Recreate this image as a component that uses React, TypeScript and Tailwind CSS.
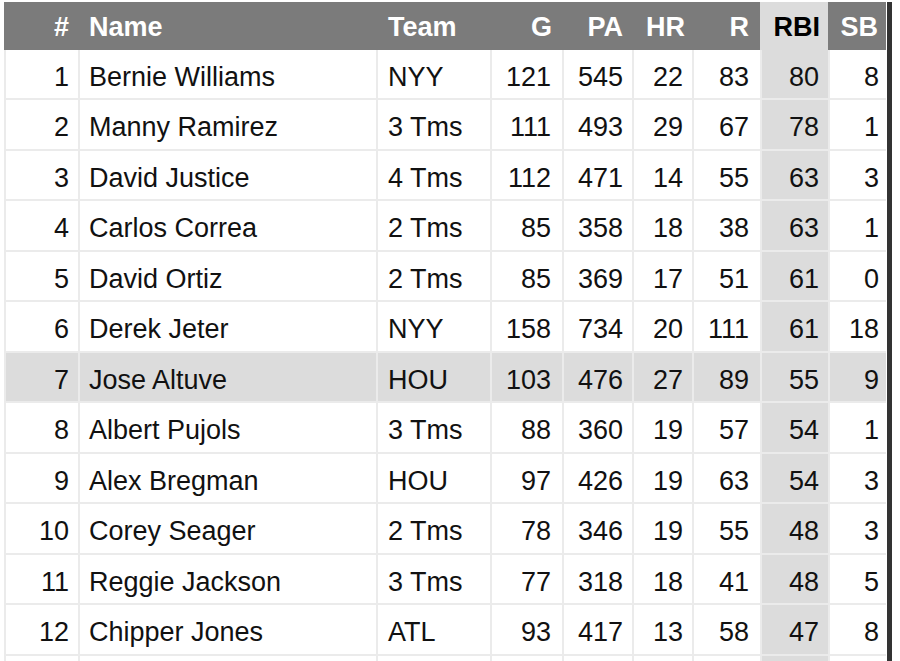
import React from "react";

type Row = [number, string, string, number, number, number, number, number, number];

const rows: Row[] = [
  [1, "Bernie Williams", "NYY", 121, 545, 22, 83, 80, 8],
  [2, "Manny Ramirez", "3 Tms", 111, 493, 29, 67, 78, 1],
  [3, "David Justice", "4 Tms", 112, 471, 14, 55, 63, 3],
  [4, "Carlos Correa", "2 Tms", 85, 358, 18, 38, 63, 1],
  [5, "David Ortiz", "2 Tms", 85, 369, 17, 51, 61, 0],
  [6, "Derek Jeter", "NYY", 158, 734, 20, 111, 61, 18],
  [7, "Jose Altuve", "HOU", 103, 476, 27, 89, 55, 9],
  [8, "Albert Pujols", "3 Tms", 88, 360, 19, 57, 54, 1],
  [9, "Alex Bregman", "HOU", 97, 426, 19, 63, 54, 3],
  [10, "Corey Seager", "2 Tms", 78, 346, 19, 55, 48, 3],
  [11, "Reggie Jackson", "3 Tms", 77, 318, 18, 41, 48, 5],
  [12, "Chipper Jones", "ATL", 93, 417, 13, 58, 47, 8],
];

const gridCols =
  "grid grid-cols-[74px_298px_114px_72px_70px_60px_68px_68px_58px]";

const cell = "flex items-center border-l-2 border-[#ebebeb] pt-[6px]";
const hcell = "flex items-center pt-[3px]";

export default function App() {
  return (
    <div
      className="h-[661px] w-[900px] overflow-hidden bg-white pl-[4px] pt-[2px] text-[#111]"
      style={{ fontFamily: '"Liberation Sans", Arial, sans-serif' }}
    >
      <div className="flex">
        <div className="w-[882px]">
          {/* header */}
          <div className={`${gridCols} h-[48px] bg-[#7b7b7b] text-[27px] font-bold text-white`}>
            <div className={`${hcell} justify-end pr-[9px]`}>#</div>
            <div className={`${hcell} pl-[11px]`}>Name</div>
            <div className={`${hcell} pl-[12px]`}>Team</div>
            <div className={`${hcell} justify-end pr-[10px]`}>G</div>
            <div className={`${hcell} justify-end pr-[9px]`}>PA</div>
            <div className={`${hcell} justify-end pr-[7px]`}>HR</div>
            <div className={`${hcell} justify-end pr-[11px]`}>R</div>
            <div className={`${hcell} justify-end bg-[#dcdcdc] pr-[8px] text-black`}>RBI</div>
            <div className={`${hcell} justify-end pr-[8px]`}>SB</div>
          </div>
          {/* body */}
          {rows.map((r, i) => {
            const hi = r[0] === 7;
            return (
              <div
                key={r[0]}
                className={`${gridCols} border-b-2 border-[#ebebeb] text-[27px] ${
                  i % 2 === 0 ? "h-[50px]" : "h-[51px]"
                } ${hi ? "bg-[#dcdcdc]" : "bg-white"}`}
              >
                <div className={`${cell} justify-end pr-[9px]`}>{r[0]}</div>
                <div className={`${cell} pl-[9px]`}>{r[1]}</div>
                <div className={`${cell} pl-[10px]`}>{r[2]}</div>
                <div className={`${cell} justify-end pr-[11px]`}>{r[3]}</div>
                <div className={`${cell} justify-end pr-[9px]`}>{r[4]}</div>
                <div className={`${cell} justify-end pr-[9px]`}>{r[5]}</div>
                <div className={`${cell} justify-end pr-[11px]`}>{r[6]}</div>
                <div className={`${cell} justify-end bg-[#dcdcdc] pr-[9px]`}>{r[7]}</div>
                <div className={`${cell} justify-end pr-[7px]`}>{r[8]}</div>
              </div>
            );
          })}
          <div className={`${gridCols} h-[50px]`}>
            <div className={cell}></div>
            <div className={cell}></div>
            <div className={cell}></div>
            <div className={cell}></div>
            <div className={cell}></div>
            <div className={cell}></div>
            <div className={cell}></div>
            <div className={`${cell} bg-[#dcdcdc]`}></div>
            <div className={cell}></div>
          </div>
        </div>
        <div className="ml-[1px] w-[5px] self-stretch bg-[#333333]"></div>
      </div>
    </div>
  );
}
